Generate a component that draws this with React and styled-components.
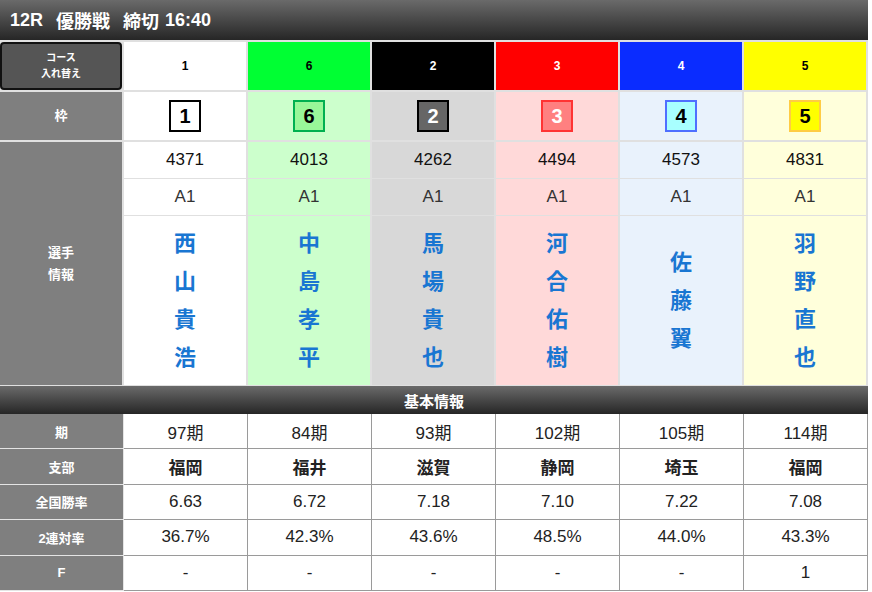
import React from "react";
import styled, { createGlobalStyle } from "styled-components";

const GlobalStyle = createGlobalStyle`
  body {
    margin: 0;
    background: #ffffff;
    font-family: "Liberation Sans", "Noto Sans CJK JP", sans-serif;
  }
`;

const racers = [
  { lane: 1, waku: 1, no: "4371", cls: "A1", name: "西山貴浩", ki: "97期", branch: "福岡", rate: "6.63", rate2: "36.7%", f: "-" },
  { lane: 2, waku: 6, no: "4013", cls: "A1", name: "中島孝平", ki: "84期", branch: "福井", rate: "6.72", rate2: "42.3%", f: "-" },
  { lane: 3, waku: 2, no: "4262", cls: "A1", name: "馬場貴也", ki: "93期", branch: "滋賀", rate: "7.18", rate2: "43.6%", f: "-" },
  { lane: 4, waku: 3, no: "4494", cls: "A1", name: "河合佑樹", ki: "102期", branch: "静岡", rate: "7.10", rate2: "48.5%", f: "-" },
  { lane: 5, waku: 4, no: "4573", cls: "A1", name: "佐藤翼", ki: "105期", branch: "埼玉", rate: "7.22", rate2: "44.0%", f: "-" },
  { lane: 6, waku: 5, no: "4831", cls: "A1", name: "羽野直也", ki: "114期", branch: "福岡", rate: "7.08", rate2: "43.3%", f: "1" },
];

const wakuColors = {
  1: { head: "#ffffff", headText: "#000", tint: "#ffffff", box: "#ffffff", border: "#000000", text: "#000" },
  2: { head: "#000000", headText: "#fff", tint: "#d8d8d8", box: "#666666", border: "#000000", text: "#fff" },
  3: { head: "#ff0000", headText: "#fff", tint: "#ffd9d9", box: "#ff8080", border: "#ff3333", text: "#fff" },
  4: { head: "#0a2cff", headText: "#fff", tint: "#e9f2fc", box: "#a8ffff", border: "#4f6fff", text: "#000" },
  5: { head: "#ffff00", headText: "#000", tint: "#ffffdb", box: "#ffff00", border: "#ffcc44", text: "#000" },
  6: { head: "#00ff33", headText: "#000", tint: "#ccffcc", box: "#99f799", border: "#00b050", text: "#000" },
};

const Page = styled.div`
  width: 868px;
`;

const TitleBar = styled.div`
  height: 40px;
  display: flex;
  align-items: center;
  padding-left: 10px;
  background: linear-gradient(#6a6a6a, #262626);
  color: #ffffff;
  font-size: 18px;
  font-weight: bold;
`;

const TitlePart = styled.span`
  margin-right: ${(p) => p.$gap || 12}px;
`;

const Upper = styled.div`
  display: grid;
  grid-template-columns: 122px repeat(6, 122px);
  grid-template-rows: 48px 48px 243px;
  gap: 2px;
  padding: 2px 2px 1px 0;
  background: #e0e0e0;
`;

const SideLabel = styled.div`
  display: flex;
  flex-direction: column;
  align-items: center;
  justify-content: center;
  background: #7f7f7f;
  color: #ffffff;
  font-size: 13px;
  font-weight: bold;
  line-height: 22px;
`;

const CourseButton = styled.div`
  display: flex;
  flex-direction: column;
  align-items: center;
  justify-content: center;
  box-sizing: border-box;
  background: #555555;
  border: 2px solid #111111;
  border-radius: 4px;
  color: #ffffff;
  font-size: 10px;
  font-weight: bold;
  line-height: 16px;
`;

const LaneHead = styled.div`
  display: flex;
  align-items: center;
  justify-content: center;
  background: ${(p) => p.$bg};
  color: ${(p) => p.$fg};
  font-size: 12px;
  font-weight: bold;
`;

const TintCell = styled.div`
  display: flex;
  align-items: center;
  justify-content: center;
  background: ${(p) => p.$bg};
`;

const WakuBox = styled.div`
  width: 28px;
  height: 28px;
  display: flex;
  align-items: center;
  justify-content: center;
  background: ${(p) => p.$bg};
  border: 2px solid ${(p) => p.$border};
  color: ${(p) => p.$fg};
  font-size: 20px;
  font-weight: bold;
`;

const PlayerCol = styled.div`
  display: flex;
  flex-direction: column;
  background: ${(p) => p.$bg};
`;

const InfoLine = styled.div`
  height: 36px;
  display: flex;
  align-items: center;
  justify-content: center;
  border-bottom: 1px solid #e0e0e0;
  color: ${(p) => p.$color || "#111"};
  font-size: 17px;
`;

const NameBox = styled.div`
  flex: 1;
  display: flex;
  flex-direction: column;
  align-items: center;
  justify-content: center;
  color: #1976d2;
  font-size: 22px;
  font-weight: bold;
  line-height: 38px;
`;

const SectionBar = styled.div`
  height: 28px;
  display: flex;
  align-items: center;
  justify-content: center;
  background: linear-gradient(#6a6a6a, #262626);
  color: #ffffff;
  font-size: 15px;
  font-weight: bold;
`;

const Row = styled.div`
  display: grid;
  grid-template-columns: repeat(7, 124px);
  height: 35.4px;
`;

const RowLabel = styled.div`
  display: flex;
  align-items: center;
  justify-content: center;
  background: #7f7f7f;
  border-right: 1px solid #e4e4e4;
  border-bottom: 1px solid #e4e4e4;
  color: #ffffff;
  font-size: 13px;
  font-weight: bold;
`;

const Value = styled.div`
  display: flex;
  align-items: center;
  justify-content: center;
  border-right: 1px solid #9a9a9a;
  border-bottom: 1px solid #9a9a9a;
  color: #222222;
  font-size: 17px;
  font-weight: ${(p) => (p.$bold ? "bold" : "normal")};
`;

const rows = [
  { label: "期", key: "ki" },
  { label: "支部", key: "branch", bold: true },
  { label: "全国勝率", key: "rate" },
  { label: "2連対率", key: "rate2" },
  { label: "F", key: "f" },
];

export default function App() {
  return (
    <>
      <GlobalStyle />
      <Page>
        <TitleBar>
          <TitlePart $gap={13}>12R</TitlePart>
          <TitlePart $gap={13}>優勝戦</TitlePart>
          <TitlePart $gap={6}>締切</TitlePart>
          <span>16:40</span>
        </TitleBar>
        <Upper>
          <CourseButton>
            <span>コース</span>
            <span>入れ替え</span>
          </CourseButton>
          {racers.map((r) => (
            <LaneHead key={"h" + r.lane} $bg={wakuColors[r.waku].head} $fg={wakuColors[r.waku].headText}>
              {r.waku}
            </LaneHead>
          ))}
          <SideLabel>枠</SideLabel>
          {racers.map((r) => {
            const c = wakuColors[r.waku];
            return (
              <TintCell key={"w" + r.lane} $bg={c.tint}>
                <WakuBox $bg={c.box} $border={c.border} $fg={c.text}>
                  {r.waku}
                </WakuBox>
              </TintCell>
            );
          })}
          <SideLabel>
            <span>選手</span>
            <span>情報</span>
          </SideLabel>
          {racers.map((r) => (
            <PlayerCol key={"p" + r.lane} $bg={wakuColors[r.waku].tint}>
              <InfoLine>{r.no}</InfoLine>
              <InfoLine $color="#333">{r.cls}</InfoLine>
              <NameBox>
                {r.name.split("").map((ch, i) => (
                  <span key={i}>{ch}</span>
                ))}
              </NameBox>
            </PlayerCol>
          ))}
        </Upper>
        <SectionBar>基本情報</SectionBar>
        {rows.map((row) => (
          <Row key={row.key}>
            <RowLabel>{row.label}</RowLabel>
            {racers.map((r) => (
              <Value key={r.lane} $bold={row.bold}>
                {r[row.key]}
              </Value>
            ))}
          </Row>
        ))}
      </Page>
    </>
  );
}
